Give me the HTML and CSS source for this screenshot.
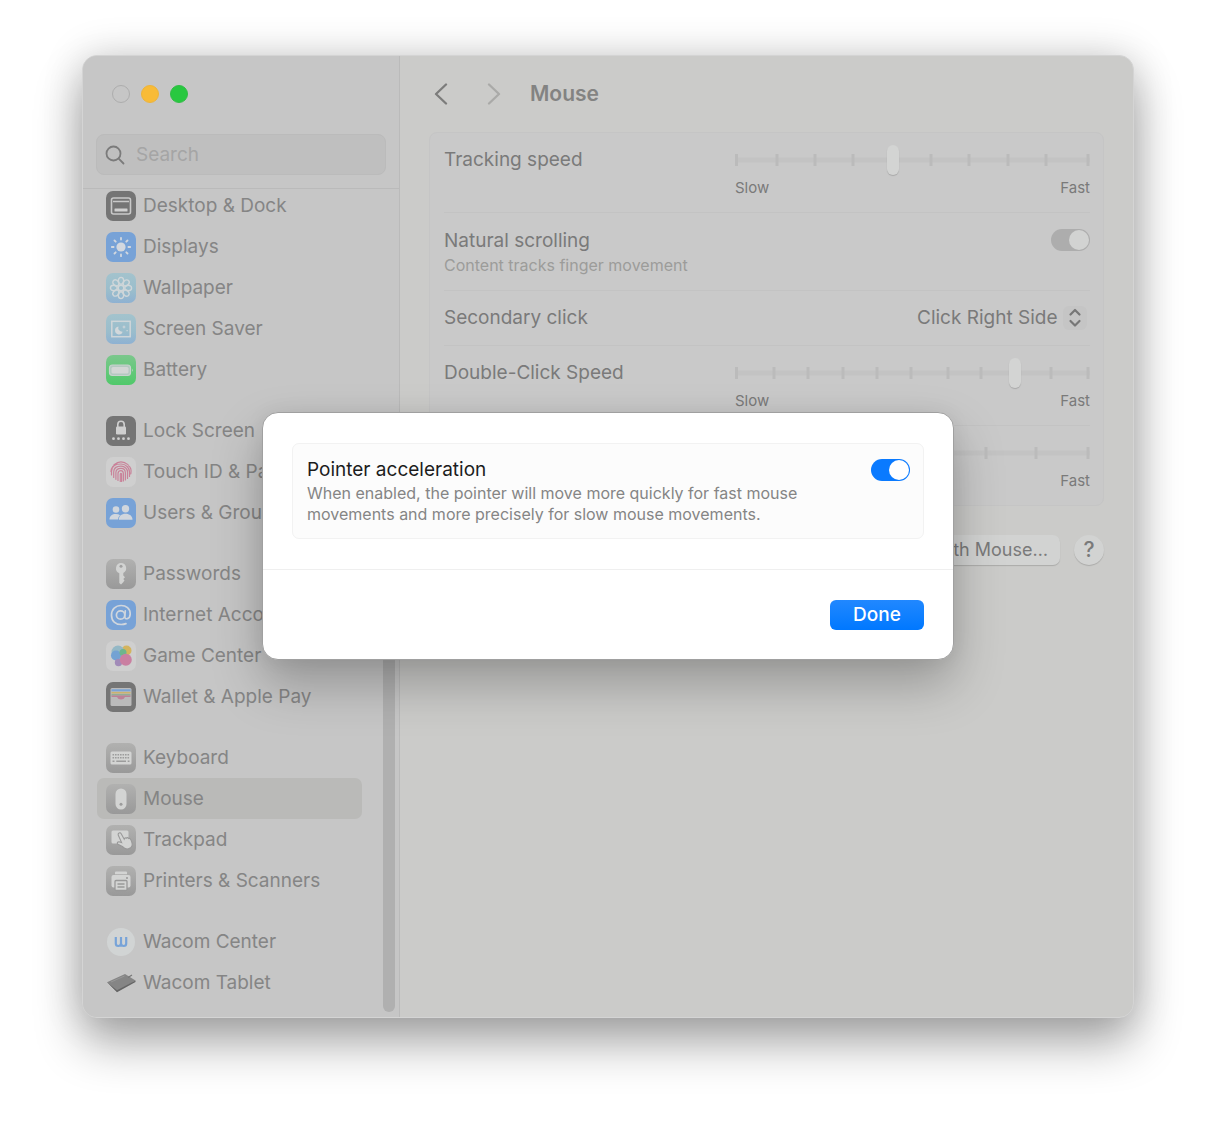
FILE: index.html
```html
<!DOCTYPE html>
<html lang="en">
<head>
	<meta charset="UTF-8">
	<meta name="viewport" content="width=device-width, initial-scale=1.0">
	<title>Mouse</title>
	<link rel="stylesheet" href="styles.css">
</head>
<body>
	<div class="window">
		<aside class="sidebar">
			<div class="sidebar-top">
				<div class="lights">
					<button class="light" aria-label="Close"></button>
					<button class="light yellow" aria-label="Minimize"></button>
					<button class="light green" aria-label="Zoom"></button>
				</div>
				<label class="search">
					<svg width="20" height="20" viewBox="0 0 20 20" fill="none" stroke="#7b7b7b" stroke-width="1.800" stroke-linecap="round"><circle cx="8.500" cy="8.500" r="7"/><path d="M13.700 13.700L18.500 18.500"/></svg>
					<input type="search" placeholder="Search" aria-label="Search">
				</label>
			</div>
			<nav class="nav">
				<div class="group">
					<a href="#desktop">
						<svg class="icon dark" viewBox="0 0 30 30"><rect x="5.500" y="7" width="19" height="16" rx="2" fill="none" stroke="#c9c9c9" stroke-width="1.600"/><path d="M7 10.500H23" stroke="#c9c9c9" stroke-width="1.300"/><rect x="8.500" y="17.500" width="13" height="3" rx=".5" fill="#d0d0d0"/></svg>
						Desktop &amp; Dock
					</a>
					<a href="#displays">
						<svg class="icon blue" viewBox="0 0 30 30" stroke="#d3d8df" stroke-width="1.800" stroke-linecap="round"><circle cx="15" cy="15" r="4.600" fill="#d3d8df" stroke="none"/><path d="M15 5.800V7.600M15 22.400V24.200M5.800 15H7.600M22.400 15H24.200M8.500 8.500L9.700 9.700M20.300 20.300L21.500 21.500M8.500 21.500L9.700 20.300M20.300 9.700L21.500 8.500"/></svg>
						Displays
					</a>
					<a href="#wallpaper">
						<svg class="icon cyan" viewBox="0 0 30 30" fill="none" stroke="#cfd6d9" stroke-width="1.400"><circle cx="15" cy="15" r="2.800"/><ellipse cx="15" cy="7.800" rx="2.700" ry="3.400"/><ellipse cx="15" cy="7.800" rx="2.700" ry="3.400" transform="rotate(45 15 15)"/><ellipse cx="15" cy="7.800" rx="2.700" ry="3.400" transform="rotate(90 15 15)"/><ellipse cx="15" cy="7.800" rx="2.700" ry="3.400" transform="rotate(135 15 15)"/><ellipse cx="15" cy="7.800" rx="2.700" ry="3.400" transform="rotate(180 15 15)"/><ellipse cx="15" cy="7.800" rx="2.700" ry="3.400" transform="rotate(225 15 15)"/><ellipse cx="15" cy="7.800" rx="2.700" ry="3.400" transform="rotate(270 15 15)"/><ellipse cx="15" cy="7.800" rx="2.700" ry="3.400" transform="rotate(315 15 15)"/></svg>
						Wallpaper
					</a>
					<a href="#screensaver">
						<svg class="icon cyan" viewBox="0 0 30 30"><rect x="5.800" y="7.300" width="18.400" height="15.400" fill="none" stroke="#cfd6d9" stroke-width="1.500"/><path d="M12.500 12.500a4 4 0 1 0 4.300 5.300a4 4 0 0 1-4.300-5.300z" fill="#d3d8db"/><path d="M18 11l.6 1.400 1.400.6-1.400.6-.6 1.400-.6-1.400-1.400-.6 1.400-.6zM20.500 16h1.200v1.200h-1.200z" fill="#d3d8db"/></svg>
						Screen Saver
					</a>
					<a href="#battery">
						<svg class="icon battery" viewBox="0 0 30 30"><rect x="3.500" y="10" width="21" height="10.500" rx="3" fill="#b4c8c0" stroke="#c8d2ce" stroke-width="1.200"/><rect x="5.500" y="12" width="17" height="6.500" rx="1.500" fill="#d3d6d5"/><path d="M26 13.500q1.600 1.700 0 3.500z" fill="#c8d2ce"/></svg>
						Battery
					</a>
				</div>
				<div class="group">
					<a href="#lock">
						<svg class="icon dark" viewBox="0 0 30 30" fill="#cfcfcf"><path d="M11.800 11V8.500a3.200 3.200 0 0 1 6.400 0V11" fill="none" stroke="#cfcfcf" stroke-width="1.600"/><rect x="10" y="10.500" width="10" height="8" rx="1.300"/><circle cx="7.500" cy="22.700" r="1.400"/><circle cx="12.500" cy="22.700" r="1.400"/><circle cx="17.500" cy="22.700" r="1.400"/><circle cx="22.500" cy="22.700" r="1.400"/></svg>
						Lock Screen
					</a>
					<a href="#touchid">
						<svg class="icon light-bg" viewBox="0 0 30 30" fill="none" stroke="#c98299" stroke-width="1.200" stroke-linecap="round"><path d="M8 7.600Q15 2 22 7.600M5 14.500Q5.500 8.500 11 6.800M24.800 17Q26 11 22.500 8.800M5.500 18V14.500C5.500 8.500 10 7 15 7S23.500 11 23.500 15V19.500M7.700 20.500V15C7.700 11 11 9.200 15 9.200S21.500 12 21.500 15V21.500M9.900 22.300V15.500C9.900 13 12 11.400 15 11.400S19.400 13.500 19.400 16V23M12 23.500V16.500C12 14.500 13.200 13.600 15 13.600S17.400 15 17.400 17V24M14.300 24.500V17Q15 15.500 15.600 17V24.500"/></svg>
						Touch ID &amp; Password
					</a>
					<a href="#users">
						<svg class="icon blue" viewBox="0 0 30 30" fill="#d0d6dd"><circle cx="10" cy="11.500" r="3.300"/><path d="M3.500 21.500C3.500 18 6 16 10 16Q12.500 16 14 17.200Q12 19 12 21.500z"/><circle cx="19.500" cy="10.800" r="3.700"/><path d="M12.800 21.800C12.800 18 15.500 15.800 19.500 15.800S26.500 18 26.500 21.800z"/></svg>
						Users &amp; Groups
					</a>
				</div>
				<div class="group">
					<a href="#passwords">
						<svg class="icon gray" viewBox="0 0 30 30"><path d="M15 4a5.300 5.300 0 0 1 2.300 10V16.500L19 18.200 17.300 19.900 18.500 21.500 17 23.500 15 25.500 13.300 24V14.200A5.300 5.300 0 0 1 15 4z" fill="#d2d3d2"/><circle cx="15" cy="7.300" r="1.500" fill="#a0a0a0"/></svg>
						Passwords
					</a>
					<a href="#accounts">
						<svg class="icon blue" viewBox="0 0 30 30" fill="none" stroke="#d0d6dd" stroke-width="1.700" stroke-linecap="round"><circle cx="14.600" cy="15" r="4.200"/><path d="M19.300 10.800L18.700 16.500C18.600 20 24 19.600 24.200 14C24.300 8.500 20 5.500 15.200 5.500C9.500 5.500 5.500 9.500 5.500 15.200C5.500 21 9.500 24.500 15.200 24.500Q18 24.500 20 23.600"/></svg>
						Internet Accounts
					</a>
					<a href="#games">
						<svg class="icon light-bg" viewBox="0 0 30 30"><circle cx="20.500" cy="9.500" r="5" fill="#d4b45e"/><circle cx="12" cy="11" r="6.500" fill="#94b8c6"/><circle cx="10" cy="14.500" r="5" fill="#74a2d3"/><circle cx="17" cy="11.500" r="3.500" fill="#6db58d"/><circle cx="12.500" cy="21.500" r="3.700" fill="#a18bb8"/><circle cx="19.800" cy="18.800" r="6" fill="#ca7fa1"/></svg>
						Game Center
					</a>
					<a href="#wallet">
						<svg class="icon dark" viewBox="0 0 30 30"><rect x="4.500" y="6" width="21" height="18" rx="1.500" fill="#bababa"/><path d="M5.500 8.300H24.500" stroke="#7ba4d4" stroke-width="2"/><path d="M5.500 10.700H24.500" stroke="#cbb26d" stroke-width="1.600"/><path d="M5.500 12.800H24.500" stroke="#85a88b" stroke-width="1.200"/><path d="M5.500 13.500H24.500V15H19Q18 17.500 15 17.500T11 15H5.500z" fill="#bd8198"/></svg>
						Wallet &amp; Apple Pay
					</a>
				</div>
				<div class="group">
					<a href="#keyboard">
						<svg class="icon gray" viewBox="0 0 30 30"><rect x="4.500" y="8.500" width="21" height="13" rx="1.500" fill="#d3d4d3"/><path d="M6.500 11.700H23.500M6.500 14.700H23.500" stroke="#9c9c9c" stroke-width="1.600" stroke-dasharray="1.600 .9"/><path d="M6.500 18.200H8.500M10.300 18.200H20M21.700 18.200H23.500" stroke="#9c9c9c" stroke-width="1.600"/></svg>
						Keyboard
					</a>
					<a class="active" href="#mouse">
						<svg class="icon gray" viewBox="0 0 30 30"><rect x="9.500" y="4.500" width="11" height="21" rx="5.500" fill="#d3d4d3"/><circle cx="15" cy="20.200" r="1.500" fill="#9c9c9c"/></svg>
						Mouse
					</a>
					<a href="#trackpad">
						<svg class="icon gray" viewBox="0 0 30 30"><rect x="5.500" y="5.500" width="17" height="13" rx="1.500" fill="#d3d4d3"/><path d="M12.500 8.500Q14 7 15.200 8.800L18.200 14.200Q18.800 12.300 20.300 13.200Q21.500 11.900 22.600 13.500Q24.200 12.900 25 15Q27.500 20 25 22.500Q20.500 26 16.300 21.500L11.500 19Q10.800 17 13 16.700L15.600 17.500L12.200 10Q12 9 12.500 8.500z" fill="#d3d4d3" stroke="#999" stroke-width="1.100"/></svg>
						Trackpad
					</a>
					<a href="#printers">
						<svg class="icon gray" viewBox="0 0 30 30"><path d="M9 8.200V6.500Q9 5.500 10 5.500H20Q21 5.500 21 6.500V8.200z" fill="#d3d4d3"/><rect x="5.500" y="9" width="19" height="12.500" rx="2" fill="#d3d4d3"/><circle cx="21" cy="12" r="1" fill="#999"/><rect x="9" y="14.500" width="12" height="10" rx="1" fill="#d3d4d3" stroke="#999" stroke-width="1.300"/><path d="M11.500 18H18.500M11.500 21H18.500" stroke="#999" stroke-width="1.300"/></svg>
						Printers &amp; Scanners
					</a>
				</div>
				<div class="group">
					<a href="#wacom-center">
						<svg class="icon" viewBox="0 0 30 30"><circle cx="15" cy="15" r="14" fill="#d1d4d4"/><path d="M9.800 10V16.500Q9.800 19 12.200 19Q15 19 15 16.500V10M15 16.500Q15 19 17.800 19Q20.200 19 20.200 16.500V10" fill="none" stroke="#77a3d8" stroke-width="2.200"/></svg>
						Wacom Center
					</a>
					<a href="#wacom-tablet">
						<svg class="icon" viewBox="0 0 30 30"><path d="M1 14.200L19 6 29.500 12.500 11 23.500z" fill="#858585"/><path d="M1 14.200L11 22.300 29.500 12.500V14L11 24.200z" fill="#656565"/><path d="M22 9.500L26 7" stroke="#777" stroke-width="1.200"/><path d="M5 14L18.500 8" stroke="#969696"/></svg>
						Wacom Tablet
					</a>
				</div>
			</nav>
			<div class="scroll-thumb"></div>
		</aside>

		<main class="main">
			<header class="toolbar">
				<button class="arrow" aria-label="Back">
					<svg width="14" height="22" viewBox="0 0 14 22" fill="none" stroke="#7c7c7b" stroke-width="2.300" stroke-linecap="round" stroke-linejoin="round"><path d="M12 1.500L2 11L12 20.500"/></svg>
				</button>
				<button class="arrow" aria-label="Forward">
					<svg width="14" height="22" viewBox="0 0 14 22" fill="none" stroke="#aaaaa8" stroke-width="2.300" stroke-linecap="round" stroke-linejoin="round"><path d="M2 1.500L12 11L2 20.500"/></svg>
				</button>
				<h1>Mouse</h1>
			</header>

			<section class="card">
				<div class="row speed">
					<label for="tracking">Tracking speed</label>
					<div class="slider">
						<svg class="ticks" viewBox="0 0 355 12"><path class="track" d="M0 6H355"/><path d="M1.500 0V12M42 0V12M80 0V12M118 0V12M196 0V12M234 0V12M273 0V12M311 0V12M353 0V12"/></svg>
						<input type="range" id="tracking" min="0" max="9" value="4">
						<div class="ends"><span>Slow</span><span>Fast</span></div>
					</div>
				</div>
				<div class="row scrolling">
					<div>
						<label for="natural">Natural scrolling</label>
						<p>Content tracks finger movement</p>
					</div>
					<input class="switch" type="checkbox" role="switch" id="natural" checked>
				</div>
				<div class="row click">
					<label for="secondary">Secondary click</label>
					<div class="select">
						<select id="secondary">
							<option>Click Right Side</option>
						</select>
						<svg width="24" height="24" viewBox="0 0 24 24" fill="none" stroke="#777" stroke-width="2.200" stroke-linecap="round" stroke-linejoin="round"><path d="M7.500 8.500L12 4L16.500 8.500M7.500 15L12 19.500L16.500 15"/></svg>
					</div>
				</div>
				<div class="row speed">
					<label for="double">Double-Click Speed</label>
					<div class="slider">
						<svg class="ticks" viewBox="0 0 355 12"><path class="track" d="M0 6H355"/><path d="M1.500 0V12M39 0V12M73 0V12M108 0V12M142 0V12M176 0V12M213 0V12M246 0V12M316 0V12M353 0V12"/></svg>
						<input type="range" id="double" min="0" max="10" value="8">
						<div class="ends"><span>Slow</span><span>Fast</span></div>
					</div>
				</div>
				<div class="row speed">
					<label for="scroll">Scrolling speed</label>
					<div class="slider">
						<svg class="ticks" viewBox="0 0 355 12"><path class="track" d="M0 6H355"/><path d="M1.500 0V12M51 0V12M101 0V12M201 0V12M251 0V12M301 0V12M353 0V12"/></svg>
						<input type="range" id="scroll" min="0" max="7" value="3">
						<div class="ends"><span></span><span>Fast</span></div>
					</div>
				</div>
			</section>

			<div class="actions">
				<button class="btn">Set Up Bluetooth Mouse…</button>
				<button class="help" aria-label="Help">?</button>
			</div>
		</main>

		<dialog class="sheet" open>
			<div class="sheet-body">
				<div class="option">
					<div>
						<label for="acceleration">Pointer acceleration</label>
						<p>When enabled, the pointer will move more quickly for fast mouse movements and more precisely for slow mouse movements.</p>
					</div>
					<input class="switch on" type="checkbox" role="switch" id="acceleration" checked>
				</div>
			</div>
			<div class="sheet-footer">
				<button class="done">Done</button>
			</div>
		</dialog>
	</div>
</body>
</html>
```
FILE: styles.css
```css
:root {
	--side: #c6c6c6;
	--main: #cbcbc9;
	--text: #7a7a7a;
	--blue: #0a7aff;
}

* { box-sizing: border-box; padding: 0; margin: 0; }

body {
	background: #fff;
	color: var(--text);
	font-family: Inter, "Liberation Sans", sans-serif;
	font-size: 19px;
	line-height: 24px;
	padding: 55px 82px 108px;
}

button, input, select {
	font: inherit;
	color: inherit;
	border: none;
	background: none;
	appearance: none;
	outline: none;
}

.window {
	position: relative;
	display: flex;
	background: var(--main);
	border: 1px solid #d4d4d4;
	border-radius: 15px;
	box-shadow: 0 26px 48px rgba(0, 0, 0, 0.32), 0 0 40px rgba(0, 0, 0, 0.16);
}

/* sidebar */

.sidebar {
	position: relative;
	flex: 0 0 317px;
	min-width: 0;
	padding-bottom: 14px;
	background: var(--side);
	border-right: 1px solid #bababa;
	border-radius: 14px 0 0 14px;
}

.sidebar-top {
	padding: 28px 13px 13px;
	border-bottom: 1px solid #bababa;
}

.lights {
	display: flex;
	gap: 11px;
	padding: 1px 16px;
}

.light {
	width: 18px;
	height: 18px;
	border: 1px solid #adadad;
	border-radius: 50%;
}

.light.yellow { background: #f8bb37; border-color: #edb43b; }
.light.green { background: #28c840; border-color: #32bd46; }

.search {
	display: flex;
	align-items: center;
	gap: 11px;
	height: 41px;
	margin-top: 30px;
	padding: 0 8px;
	background: #bfbfbf;
	border: 1px solid #bbb;
	border-radius: 8px;
}

.search input { flex: 1; min-width: 0; }
.search input::placeholder { color: #a5a5a5; opacity: 1; }

.nav {
	display: flex;
	flex-direction: column;
	gap: 20px;
	margin-top: -4px;
	padding: 0 37px 0 14px;
}

.nav a {
	display: flex;
	align-items: center;
	gap: 7px;
	height: 41px;
	padding-left: 9px;
	border-radius: 7px;
	color: #858585;
	text-decoration: none;
	white-space: nowrap;
}

.nav a.active { background: #babab8; }

.icon {
	flex: none;
	width: 30px;
	height: 30px;
	border-radius: 7px;
}

.dark { background: #757575; }
.blue { background: #77a2d7; }
.cyan { background: linear-gradient(#a3c3cd, #9abdcc 60%, #8eb1d2); }
.gray { background: linear-gradient(#b1b1b0, #999); }
.light-bg { background: #cfcfcf; }
.battery { background: linear-gradient(#7bc78c, #50c96a); }

.scroll-thumb {
	position: absolute;
	right: 4px;
	bottom: 5px;
	width: 12px;
	height: 45%;
	border-radius: 6px;
	background: #b0b0b0;
}

/* content */

.main {
	flex: 1;
	min-width: 0;
	padding: 0 29px;
}

.toolbar {
	display: flex;
	align-items: center;
	height: 76px;
	padding-left: 5px;
}

.arrow {
	width: 14px;
	height: 22px;
	margin-right: 39px;
}

.arrow + .arrow { margin-right: 29px; }

.arrow svg { display: block; }

h1 {
	font-size: 21px;
	font-weight: 600;
	color: #838382;
}

.card {
	padding: 0 13px 0 14px;
	background: #c9c9c9;
	border: 1px solid #c5c5c5;
	border-radius: 8px;
}

.row {
	display: flex;
	justify-content: space-between;
	padding-top: 15px;
	border-bottom: 1px solid #c3c3c3;
}

.row p {
	font-size: 16px;
	color: #9c9c9a;
}

.speed { height: 80px; }
.scrolling { height: 78px; padding-top: 16px; }
.click { height: 55px; }

.row:last-child {
	height: 79px;
	border-bottom: none;
}

.slider {
	display: grid;
	flex: 0 0 355px;
	align-content: start;
}

.ticks {
	grid-area: 1 / 1;
	align-self: center;
	width: 100%;
	fill: none;
	stroke: #bbb;
	stroke-width: 3;
}

.ticks .track { stroke: #c3c3c3; stroke-width: 5; }

.slider input {
	grid-area: 1 / 1;
	width: 100%;
	height: 24px;
}

.slider input::-webkit-slider-thumb {
	appearance: none;
	width: 12px;
	height: 30px;
	border-radius: 6px;
	background: #d3d4d3;
	box-shadow: 0 1px 1px rgba(0, 0, 0, 0.16);
}

.ends {
	display: flex;
	justify-content: space-between;
	padding-top: 4px;
	font-size: 15px;
}

.switch {
	flex: none;
	width: 39px;
	height: 22px;
	border-radius: 11px;
	background: #adadad;
}

.switch::before {
	content: "";
	display: block;
	width: 20px;
	height: 20px;
	margin: 1px 1px 1px 18px;
	border-radius: 50%;
	background: #d2d3d2;
}

.switch.on { background: var(--blue); }
.switch.on::before { background: #fff; }

.select {
	display: flex;
	align-items: center;
	gap: 5px;
	height: 24px;
	padding-right: 3px;
}

.select svg {
	background: #c5c5c5;
	border-radius: 6px;
}

.actions {
	display: flex;
	justify-content: flex-end;
	gap: 14px;
	padding-top: 29px;
}

.btn {
	height: 30px;
	padding: 0 12px;
	border-radius: 7px;
	background: #d2d3d2;
	box-shadow: 0 1px 1px rgba(0, 0, 0, 0.16);
	font-size: 18px;
}

.help {
	width: 30px;
	height: 30px;
	border-radius: 50%;
	background: #d2d3d2;
	box-shadow: 0 1px 1px rgba(0, 0, 0, 0.16);
	font-size: 21px;
	font-weight: 500;
}

/* sheet */

.sheet {
	position: absolute;
	top: 356px;
	left: 0;
	right: 0;
	width: 692px;
	margin: 0 auto;
	border: 1px solid #a0a0a0;
	border-radius: 16px;
	background: #fff;
	color: #1c1c1c;
	box-shadow: 0 24px 50px rgba(0, 0, 0, 0.26), 0 0 20px rgba(0, 0, 0, 0.06);
}

.sheet-body {
	padding: 30px 29px;
	border-bottom: 1px solid #efefef;
}

.option {
	display: flex;
	justify-content: space-between;
	gap: 60px;
	padding: 14px 13px 13px 14px;
	background: #fcfcfc;
	border: 1px solid #f2f2f2;
	border-radius: 7px;
}

.option .switch { margin-top: 1px; }

.option p {
	margin-top: 1px;
	font-size: 16px;
	line-height: 21px;
	color: #858585;
}

.sheet-footer {
	display: flex;
	justify-content: flex-end;
	padding: 30px 29px 29px;
}

.done {
	width: 94px;
	height: 30px;
	border-radius: 6px;
	background: linear-gradient(#2188ff, #0078ff);
	color: #fff;
	font-weight: 500;
}
```
